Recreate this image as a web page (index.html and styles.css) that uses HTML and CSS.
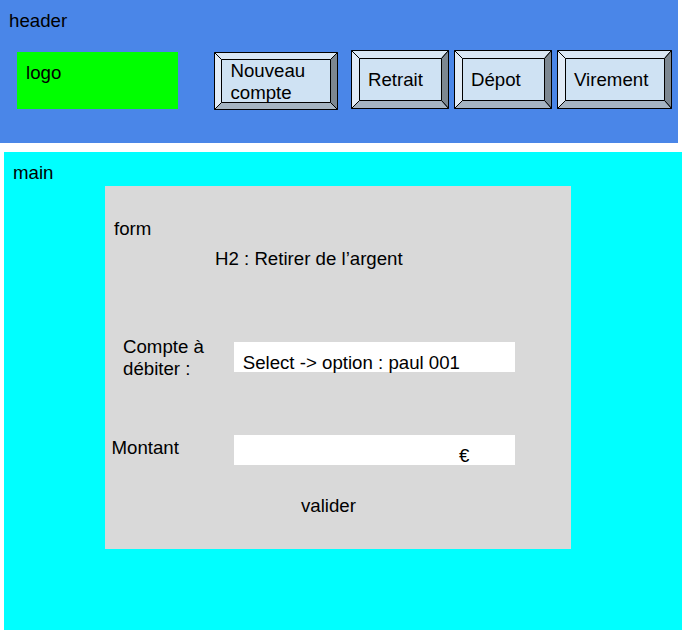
FILE: index.html
```html
<!DOCTYPE html>
<html lang="fr">
<head>
<meta charset="utf-8">
<title>Retirer de l’argent</title>
<link rel="stylesheet" href="styles.css">
</head>
<body>
<header class="header">
  <div class="header-label">header</div>
  <div class="bar">
    <div class="logo">logo</div>
    <nav class="nav">
      <a class="key key-new">
        <svg class="bevel" viewBox="0 0 124 58" stroke="#000" stroke-width="1">
          <path fill="#d9e7f5" d="M.5 .5H123.5L116.5 7.5H7.5Z"/>
          <path fill="#e2ecf7" d="M.5 .5L7.5 7.5V50.5L.5 57.5Z"/>
          <path fill="#7c8791" d="M123.5 .5V57.5L116.5 50.5V7.5Z"/>
          <path fill="#a5b4c2" d="M.5 57.5L7.5 50.5H116.5L123.5 57.5Z"/>
          <path fill="#cfe2f3" d="M7.5 7.5H116.5V50.5H7.5Z"/>
        </svg>
        <span class="key-text">Nouveau compte</span>
      </a>
      <a class="key key-withdraw">
        <svg class="bevel" viewBox="0 0 98 59" stroke="#000" stroke-width="1">
          <path fill="#d9e7f5" d="M.5 .5H97.5L90.5 8.5H8.5Z"/>
          <path fill="#e2ecf7" d="M.5 .5L8.5 8.5V50.5L.5 58.5Z"/>
          <path fill="#7c8791" d="M97.5 .5V58.5L90.5 50.5V8.5Z"/>
          <path fill="#a5b4c2" d="M.5 58.5L8.5 50.5H90.5L97.5 58.5Z"/>
          <path fill="#cfe2f3" d="M8.5 8.5H90.5V50.5H8.5Z"/>
        </svg>
        <span class="key-text">Retrait</span>
      </a>
      <a class="key key-deposit">
        <svg class="bevel" viewBox="0 0 98 59" stroke="#000" stroke-width="1">
          <path fill="#d9e7f5" d="M.5 .5H97.5L90.5 8.5H8.5Z"/>
          <path fill="#e2ecf7" d="M.5 .5L8.5 8.5V50.5L.5 58.5Z"/>
          <path fill="#7c8791" d="M97.5 .5V58.5L90.5 50.5V8.5Z"/>
          <path fill="#a5b4c2" d="M.5 58.5L8.5 50.5H90.5L97.5 58.5Z"/>
          <path fill="#cfe2f3" d="M8.5 8.5H90.5V50.5H8.5Z"/>
        </svg>
        <span class="key-text">Dépot</span>
      </a>
      <a class="key key-transfer">
        <svg class="bevel" viewBox="0 0 115 59" stroke="#000" stroke-width="1">
          <path fill="#d9e7f5" d="M.5 .5H114.5L107.5 8.5H8.5Z"/>
          <path fill="#e2ecf7" d="M.5 .5L8.5 8.5V50.5L.5 58.5Z"/>
          <path fill="#7c8791" d="M114.5 .5V58.5L107.5 50.5V8.5Z"/>
          <path fill="#a5b4c2" d="M.5 58.5L8.5 50.5H107.5L114.5 58.5Z"/>
          <path fill="#cfe2f3" d="M8.5 8.5H107.5V50.5H8.5Z"/>
        </svg>
        <span class="key-text">Virement</span>
      </a>
    </nav>
  </div>
</header>
<main class="main">
  <div class="main-label">main</div>
  <form class="form">
    <div class="form-label">form</div>
    <h2 class="title">H2 : Retirer de l’argent</h2>
    <div class="row row-account">
      <label class="label label-account">Compte à débiter :</label>
      <div class="field field-select">Select -&gt; option : paul 001</div>
    </div>
    <div class="row row-amount">
      <label class="label label-amount">Montant</label>
      <div class="field field-amount">€</div>
    </div>
    <div class="submit">valider</div>
  </form>
</main>
</body>
</html>
```

FILE: styles.css
```css
* {
  box-sizing: border-box;
}

body {
  margin: 0;
  background: #fff;
  color: #000;
  font: 18.67px/22px "Liberation Sans", Arial, sans-serif;
}

.header {
  width: 678px;
  height: 143px;
  padding-top: 10px;
  background: #4a86e8;
}

.header-label {
  padding-left: 9px;
}

.bar {
  display: flex;
  align-items: flex-start;
  margin-top: 18px;
  padding-left: 17px;
}

.logo {
  width: 161px;
  height: 57px;
  margin-top: 2px;
  padding: 10px 0 0 9px;
  background: #0f0;
}

.nav {
  display: flex;
  align-items: flex-start;
  gap: 5px;
  margin-left: 36px;
}

.key {
  position: relative;
  display: flex;
  align-items: center;
  height: 59px;
  padding-left: 17px;
}

.key-new {
  width: 124px;
  height: 58px;
  margin: 2px 8px 0 0;
  padding: 2px 0 0 16.5px;
}

.key-withdraw,
.key-deposit {
  width: 98px;
}

.key-transfer {
  width: 115px;
}

.bevel {
  position: absolute;
  inset: 0;
  width: 100%;
  height: 100%;
  stroke-linejoin: round;
}

.key-text {
  position: relative;
}

.main {
  width: 678px;
  height: 478px;
  margin: 9px 0 0 4px;
  padding-top: 10px;
  background: #0ff;
}

.main-label {
  padding-left: 9px;
}

.form {
  width: 466px;
  height: 363px;
  margin: 2px 0 0 101px;
  padding-top: 32px;
  background: #d9d9d9;
}

.form-label {
  padding-left: 9px;
}

.title {
  margin: 8px 0 0 110px;
  font-size: inherit;
  font-weight: normal;
}

.row {
  display: flex;
  align-items: flex-start;
}

.row-account {
  margin-top: 66px;
}

.row-amount {
  margin-top: 55px;
}

.label {
  width: 129px;
}

.label-account {
  padding: 0 20px 0 18px;
}

.label-amount {
  padding: 2px 0 0 6.5px;
}

.field {
  width: 281px;
  height: 30px;
  background: #fff;
}

.field-select {
  margin-top: 6px;
  padding: 10px 0 0 8.7px;
}

.field-amount {
  padding: 10px 0 0 225px;
}

.submit {
  margin: 30px 0 0 196px;
}
```
